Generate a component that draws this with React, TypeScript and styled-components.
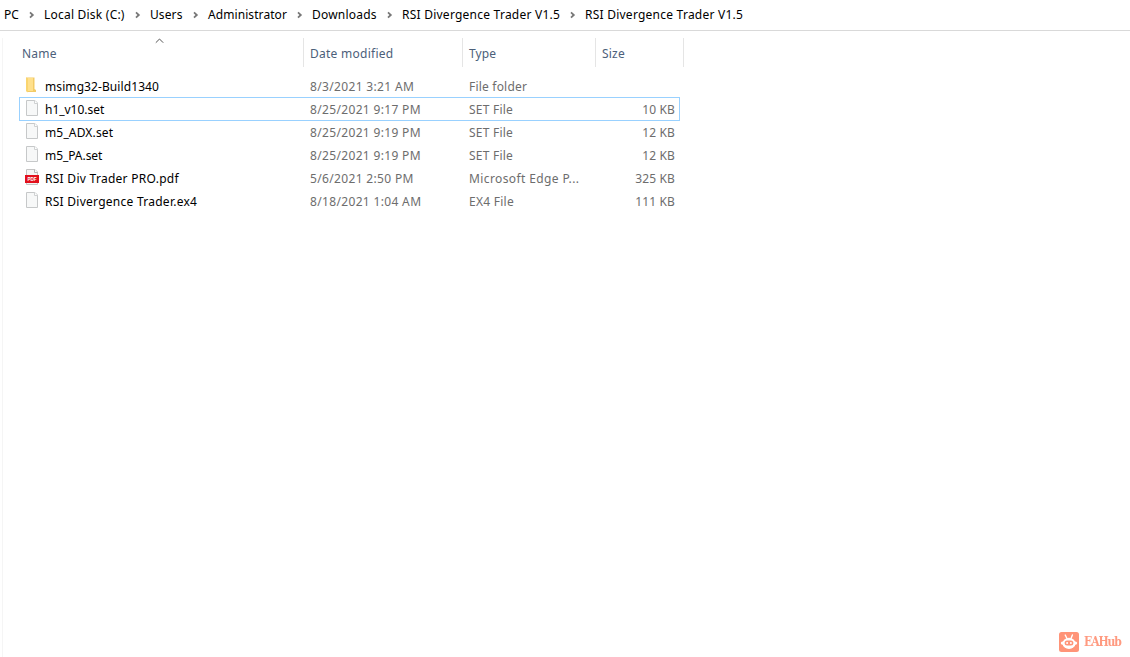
import React from 'react';
import styled, { createGlobalStyle } from 'styled-components';

const GlobalStyle = createGlobalStyle`
  * { box-sizing: border-box; }
  body {
    margin: 0;
    background: #fff;
    font-family: "Noto Sans", "Open Sans", sans-serif;
    font-size: 12px;
    color: #000;
    overflow: hidden;
  }
`;

const Window = styled.div`
  display: flex;
  flex-direction: column;
  width: 1130px;
  height: 657px;
  background: #fff;
`;

const AddressBar = styled.nav`
  display: flex;
  align-items: center;
  flex: none;
  height: 31px;
  padding: 0 0 1px 4px;
  border-bottom: 1px solid #d9d9d9;
`;

const Crumb = styled.span<{ $width: number; $spacing?: number }>`
  flex: none;
  width: ${(p) => p.$width}px;
  line-height: 18px;
  letter-spacing: ${(p) => p.$spacing ?? 0}px;
  white-space: nowrap;
`;

const Separator = styled.span`
  display: flex;
  flex: none;
  justify-content: center;
  width: 25px;
`;

const Content = styled.main`
  display: flex;
  flex-direction: column;
  flex: 1;
  margin: 7px 0 0 2px;
  border-left: 1px solid #f5f5f5;
`;

const HeaderRow = styled.div`
  display: flex;
  flex: none;
  height: 29px;
  padding-left: 13px;
`;

const HeaderCell = styled.div<{ $width: number; $spacing?: number }>`
  position: relative;
  flex: none;
  width: ${(p) => p.$width}px;
  padding-left: 6px;
  border-right: 1px solid #e5e5e5;
  color: #4c607a;
  line-height: 31px;
  letter-spacing: ${(p) => p.$spacing ?? 0}px;
`;

const SortMark = styled.svg`
  position: absolute;
  top: 0;
  left: 139px;
`;

const Rows = styled.div`
  display: flex;
  flex-direction: column;
  width: 661px;
  margin: 7px 0 0 16px;
`;

const Row = styled.div<{ $focused?: boolean }>`
  display: flex;
  align-items: flex-start;
  height: ${(p) => (p.$focused ? 24 : 23)}px;
  margin-bottom: ${(p) => (p.$focused ? -1 : 0)}px;
  padding: 0 4px;
  border: 1px solid ${(p) => (p.$focused ? '#99d1ff' : 'transparent')};
`;

const IconBox = styled.span`
  display: flex;
  flex: none;
  width: 21px;
  height: 18px;
  margin-top: 1px;
`;

const Cell = styled.span<{ $width: number; $muted?: boolean; $spacing?: number; $right?: boolean }>`
  flex: none;
  width: ${(p) => p.$width}px;
  margin-top: 3px;
  line-height: 18px;
  color: ${(p) => (p.$muted ? '#6d6d6d' : '#000')};
  letter-spacing: ${(p) => p.$spacing ?? 0}px;
  text-align: ${(p) => (p.$right ? 'right' : 'left')};
  white-space: nowrap;
`;

const Watermark = styled.div`
  position: fixed;
  left: 1059px;
  top: 632px;
  display: flex;
  align-items: center;
  gap: 5px;
  height: 20px;
  color: #ff9a80;
  font: bold 12px/22px "DejaVu Serif Condensed", "DejaVu Serif", serif;
  font-stretch: condensed;
  letter-spacing: -1.1px;
`;

const Chevron = () => (
  <svg width="6" height="8" viewBox="0 0 6 8">
    <path d="M1 1.4 3.8 4 1 6.6" fill="none" stroke="#777" strokeWidth="1.8" />
  </svg>
);

const FolderIcon = () => (
  <svg width="16" height="18" viewBox="0 0 16 18">
    <path d="M2 1.5h8.5V13l1.5 1v2H4l-2-1z" fill="#f3cb66" />
    <path d="M3.5 2H9v13H4z" fill="#ffe08c" />
    <path d="M2 1.5 4 3v13.5L2 15z" fill="#fad56f" />
  </svg>
);

const PageIcon = () => (
  <svg width="16" height="18" viewBox="0 0 16 18">
    <path d="M2.5 1.5h8.5l2.5 2.5v12.5h-11z" fill="#f7f8f8" stroke="#c6c8c9" />
    <path d="M10.5 1.5v3h3" fill="#fff" stroke="#cfd1d2" />
  </svg>
);

const PdfIcon = () => (
  <svg width="16" height="18" viewBox="0 0 16 18">
    <path d="M2.5 1.5h8.5l2.5 2.5v12.5h-11z" fill="#f5f5f5" stroke="#c4c4c4" />
    <path d="M10.5 1.5v3h3" fill="#fff" stroke="#b5b5b5" />
    <rect x="1" y="7" width="14" height="8" fill="#e2101c" />
    <text x="8" y="12.7" fill="#fff" fontSize="4.6" fontWeight="700" textAnchor="middle" fontFamily="Liberation Sans, sans-serif">PDF</text>
  </svg>
);

const BotLogo = () => (
  <svg width="20" height="20" viewBox="0 0 20 20">
    <rect width="20" height="20" rx="2.5" fill="#ff9478" />
    <path d="M6.2 3 8 6.5M13.4 3 12 6.5" stroke="#fff" strokeWidth="1.4" strokeLinecap="round" />
    <ellipse cx="10" cy="11.4" rx="6.4" ry="5.6" fill="#fff" />
    <rect x="1.8" y="9.4" width="16.4" height="3.4" rx="1.7" fill="#fff" />
    <rect x="5.6" y="8.6" width="8.8" height="5" rx="2.5" fill="#ff9478" />
    <circle cx="8.1" cy="11.1" r="1" fill="#fff" />
    <circle cx="11.9" cy="11.1" r="1" fill="#fff" />
  </svg>
);

const crumbs = [
  { label: 'PC', width: 15 },
  { label: 'Local Disk (C:)', width: 81, spacing: 0.22 },
  { label: 'Users', width: 33, spacing: 0.1 },
  { label: 'Administrator', width: 79, spacing: 0.08 },
  { label: 'Downloads', width: 65, spacing: 0.22 },
  { label: 'RSI Divergence Trader V1.5', width: 158, spacing: 0.24 },
  { label: 'RSI Divergence Trader V1.5', width: 158, spacing: 0.24 },
];

const files = [
  { icon: <FolderIcon />, name: 'msimg32-Build1340', spacing: 0.09, date: '8/3/2021 3:21 AM', type: 'File folder', typeSpacing: 0.2, size: '' },
  { icon: <PageIcon />, name: 'h1_v10.set', spacing: -0.03, date: '8/25/2021 9:17 PM', type: 'SET File', typeSpacing: 0.22, size: '10 KB', focused: true },
  { icon: <PageIcon />, name: 'm5_ADX.set', spacing: 0.15, date: '8/25/2021 9:19 PM', type: 'SET File', typeSpacing: 0.22, size: '12 KB' },
  { icon: <PageIcon />, name: 'm5_PA.set', spacing: -0.05, date: '8/25/2021 9:19 PM', type: 'SET File', typeSpacing: 0.22, size: '12 KB' },
  { icon: <PdfIcon />, name: 'RSI Div Trader PRO.pdf', spacing: 0.28, date: '5/6/2021 2:50 PM', type: 'Microsoft Edge P...', typeSpacing: 0.39, size: '325 KB' },
  { icon: <PageIcon />, name: 'RSI Divergence Trader.ex4', spacing: 0.26, date: '8/18/2021 1:04 AM', type: 'EX4 File', typeSpacing: 0.26, size: '111 KB' },
];

export default function App() {
  return (
    <Window>
      <GlobalStyle />
      <AddressBar>
        {crumbs.map((c, i) => (
          <React.Fragment key={i}>
            {i > 0 && <Separator><Chevron /></Separator>}
            <Crumb $width={c.width} $spacing={c.spacing}>{c.label}</Crumb>
          </React.Fragment>
        ))}
      </AddressBar>
      <Content>
        <HeaderRow>
          <HeaderCell $width={288} $spacing={0.2}>
            Name
            <SortMark width="9" height="6" viewBox="0 0 9 6">
              <path d="M.8 4.7 4.5 1l3.7 3.7" fill="none" stroke="#555" />
            </SortMark>
          </HeaderCell>
          <HeaderCell $width={159} $spacing={0.26}>Date modified</HeaderCell>
          <HeaderCell $width={133} $spacing={0.1}>Type</HeaderCell>
          <HeaderCell $width={88} $spacing={0.2}>Size</HeaderCell>
        </HeaderRow>
        <Rows>
          {files.map((f) => (
            <Row key={f.name} $focused={f.focused}>
              <IconBox>{f.icon}</IconBox>
              <Cell $width={265} $spacing={f.spacing}>{f.name}</Cell>
              <Cell $width={159} $muted $spacing={0.34}>{f.date}</Cell>
              <Cell $width={126} $muted $spacing={f.typeSpacing}>{f.type}</Cell>
              <Cell $width={80} $muted $right $spacing={0.12}>{f.size}</Cell>
            </Row>
          ))}
        </Rows>
      </Content>
      <Watermark>
        <BotLogo />
        <span>EAHub</span>
      </Watermark>
    </Window>
  );
}
